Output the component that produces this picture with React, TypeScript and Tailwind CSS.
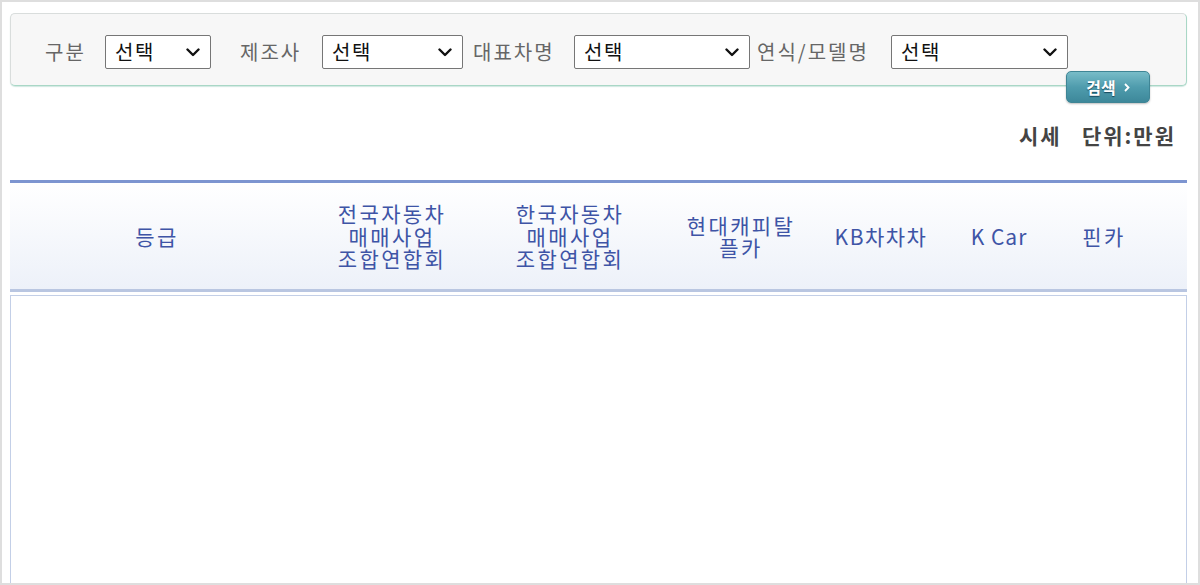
import React from "react";

const Chevron = () => (
  <svg width="14" height="9" viewBox="0 0 14 9" className="shrink-0">
    <polyline points="1.5,1.5 7,7 12.5,1.5" fill="none" stroke="#111" strokeWidth="2.4" strokeLinecap="round" strokeLinejoin="round" />
  </svg>
);

const Select = ({ w }: { w: string }) => (
  <div className={`${w} shrink-0 h-[34px] border border-[#767676] rounded-[2px] bg-white flex items-center justify-between pl-[9px] pr-[10px]`}>
    <span className="text-[20px] text-[#111] leading-none tracking-[1.5px]">선택</span>
    <Chevron />
  </div>
);

const Label = ({ w, ml, children }: { w: string; ml: string; children: React.ReactNode }) => (
  <span className={`${w} ${ml} shrink-0 text-[20px] text-[#666] leading-none tracking-[2px] whitespace-nowrap`}>
    {children}
  </span>
);

const cols = [
  { w: "w-[294px]", tr: "tracking-[2.4px]", t: ["등급"] },
  { w: "w-[176px]", tr: "tracking-[2.4px]", t: ["전국자동차", "매매사업", "조합연합회"] },
  { w: "w-[180px]", tr: "tracking-[2.4px]", t: ["한국자동차", "매매사업", "조합연합회"] },
  { w: "w-[162px]", tr: "tracking-[2.4px]", t: ["현대캐피탈", "플카"] },
  { w: "w-[118px]", tr: "tracking-[1.5px]", t: ["KB차차차"] },
  { w: "w-[118px]", tr: "tracking-[1px]", t: ["K Car"] },
  { w: "w-[92px]", tr: "tracking-[2.4px]", t: ["핀카"] },
];

export default function App() {
  return (
    <div
      className="w-[1200px] h-[585px] border-2 border-[#dedede] bg-white overflow-hidden"
      style={{ fontFamily: '"Noto Sans CJK KR", "Noto Sans", sans-serif' }}
    >
      <div className="pl-[8px] pr-[11px] pt-[11px]">
        {/* search box */}
        <div className="h-[73px] rounded-[5px] border border-[#d9dddc] border-r-[#a9d7c6] border-b-[#a9d7c6] bg-[#f7f7f7] shadow-[0_1px_1px_rgba(120,190,170,0.35)] pl-[34px] pt-[21px]">
          <div className="flex items-center">
            <Label w="w-[60px]" ml="ml-0">구분</Label>
            <Select w="w-[106px]" />
            <Label w="w-[82px]" ml="ml-[29px]">제조사</Label>
            <Select w="w-[141px]" />
            <Label w="w-[101px]" ml="ml-[10px]">대표차명</Label>
            <Select w="w-[176px]" />
            <Label w="w-[134px]" ml="ml-[7px]">연식/모델명</Label>
            <Select w="w-[177px]" />
          </div>
        </div>

        {/* search button */}
        <div className="flex justify-end pr-[37px] -mt-[15px]">
          <button className="w-[84px] h-[32px] rounded-[5px] border border-[#3f8595] bg-gradient-to-b from-[#78bcc8] via-[#4f9cad] to-[#3d889a] shadow-[0_1px_2px_rgba(0,0,0,0.25)] flex items-center justify-center gap-[8px]">
            <span className="text-white font-bold text-[16px] leading-none [text-shadow:0_1px_1px_rgba(0,40,60,0.7)]">검색</span>
            <svg width="6" height="9" viewBox="0 0 6 9">
              <polyline points="1,1 4.5,4.5 1,8" fill="none" stroke="#fff" strokeWidth="1.8" />
            </svg>
          </button>
        </div>

        {/* unit */}
        <div className="h-[77px] flex justify-end items-start pt-[20px] pr-[11px]">
          <span className="text-[21px] font-bold text-[#444] leading-[24px] tracking-[2px] whitespace-nowrap">
            시세&nbsp;&nbsp;&nbsp;단위:만원
          </span>
        </div>

        {/* table header */}
        <div className="border-t-[3px] border-[#7d95d0]">
          <div className="h-[106px] bg-gradient-to-b from-white to-[#edf1f9] flex items-center">
            {cols.map((c, i) => (
              <div key={i} className={`${c.w} ${c.tr} shrink-0 flex flex-col items-center text-[#3e54a6] text-[21px] leading-[22.5px] text-center`}>
                {c.t.map((l, j) => (
                  <span key={j} className="whitespace-nowrap">{l}</span>
                ))}
              </div>
            ))}
          </div>
          <div className="h-[3px] bg-[#b9c6e1]" />
          <div className="h-[3px] bg-white" />
          <div className="h-[300px] border border-[#c3cfe7] bg-white" />
        </div>
      </div>
    </div>
  );
}
